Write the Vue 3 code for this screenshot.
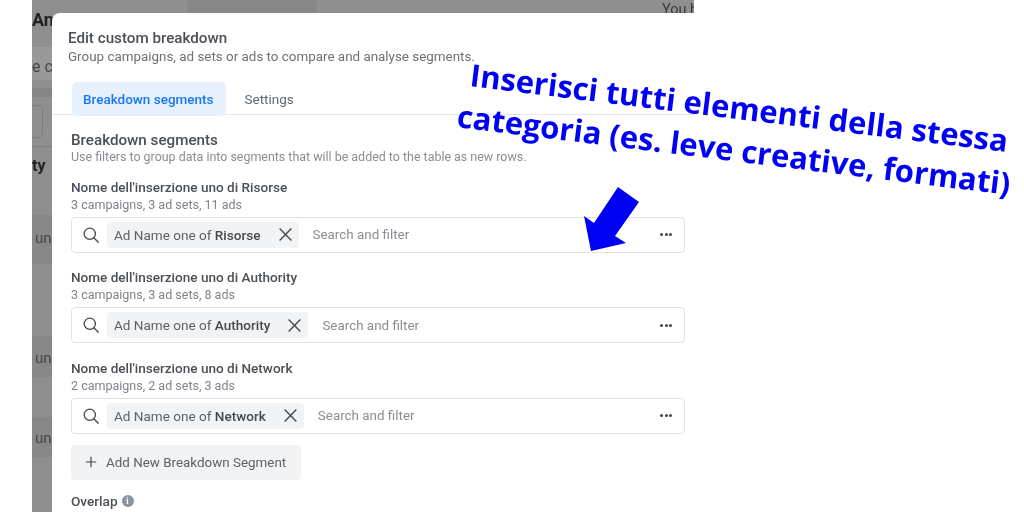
<script setup>
const segments = [
  { title: "Nome dell'inserzione uno di Risorse", meta: '3 campaigns, 3 ad sets, 11 ads', value: 'Risorse' },
  { title: "Nome dell'inserzione uno di Authority", meta: '3 campaigns, 3 ad sets, 8 ads', value: 'Authority' },
  { title: "Nome dell'inserzione uno di Network", meta: '2 campaigns, 2 ad sets, 3 ads', value: 'Network' },
]
</script>

<template>
  <div class="page">
    <div class="shot">
      <div class="backdrop">
        <div class="top-chip"></div>
        <div class="you">You h</div>
        <div class="bg-an">An</div>
        <div class="band b1"><span>e co</span></div>
        <div class="band b1a"></div>
        <div class="band-box"></div>
        <div class="rule"></div>
        <div class="bg-ty">ty</div>
        <div class="band b2"><span>uno</span></div>
        <div class="band b3"><span>uno</span></div>
        <div class="band b4"><span>uno</span></div>
      </div>
      <section class="modal">
        <header class="head">
          <h1>Edit custom breakdown</h1>
          <p>Group campaigns, ad sets or ads to compare and analyse segments.</p>
        </header>
        <nav class="tabs">
          <span class="tab active">Breakdown segments</span>
          <span class="tab">Settings</span>
        </nav>
        <div class="body">
          <h2>Breakdown segments</h2>
          <p class="hint">Use filters to group data into segments that will be added to the table as new rows.</p>
          <div v-for="s in segments" :key="s.value" class="segment">
            <h3>{{ s.title }}</h3>
            <p class="meta">{{ s.meta }}</p>
            <div class="field">
              <svg class="search" viewBox="0 0 16 16" width="16" height="16">
                <circle cx="6.8" cy="6.8" r="5.6" fill="none" stroke="#444950" stroke-width="1.3" />
                <path d="M10.8 10.8 15.6 15.6" stroke="#444950" stroke-width="1.3" fill="none" />
              </svg>
              <span class="chip">
                <span>Ad Name one of <b>{{ s.value }}</b></span>
                <svg class="x" viewBox="0 0 13 13" width="13" height="13">
                  <path d="M0.6 0.6 12.4 12.4M12.4 0.6 0.6 12.4" stroke="#444950" stroke-width="1.4" fill="none" />
                </svg>
              </span>
              <span class="placeholder">Search and filter</span>
              <span class="dots"><i></i><i></i><i></i></span>
            </div>
          </div>
          <button class="add">
            <svg viewBox="0 0 12 12" width="12" height="12">
              <path d="M6 .8v10.4M.8 6h10.4" stroke="#444950" stroke-width="1.2" fill="none" />
            </svg>
            Add New Breakdown Segment
          </button>
          <div class="overlap">Overlap <span class="info">i</span></div>
        </div>
      </section>
    </div>

    <div class="note">
      <div class="line l1">Inserisci tutti elementi della stessa</div>
      <div class="line l2">categoria (es. leve creative, formati)</div>
    </div>
    <svg class="arrow" viewBox="0 0 1024 512" width="1024" height="512">
      <polygon points="618,187 639,202 615,236 626,243 591,251 584,216 594,223" fill="#0000f5" />
    </svg>
  </div>
</template>

<style scoped>
.page {
  position: relative;
  width: 1024px;
  height: 512px;
  overflow: hidden;
  background: #fff;
  font-family: Roboto, "Liberation Sans", sans-serif;
  color: #444950;
  filter: blur(0.35px);
}
.shot {
  position: relative;
  width: 662px;
  height: 512px;
  margin-left: 32px;
  padding: 13px 0 0 20px;
  box-sizing: border-box;
}
.backdrop {
  position: absolute;
  inset: 0;
  background: #8f8f8f;
  overflow: hidden;
  color: #333;
}
.top-chip {
  position: absolute;
  left: 155px;
  top: 0;
  width: 130px;
  height: 30px;
  background: #878787;
  border-radius: 4px;
}
.you {
  position: absolute;
  left: 630px;
  top: 1px;
  font-size: 14.5px;
  line-height: 18px;
  color: #3a3a3a;
  white-space: nowrap;
}
.bg-an {
  position: absolute;
  left: 0;
  top: 9px;
  font-size: 18px;
  line-height: 22px;
  font-weight: 700;
  color: #222;
}
.bg-ty {
  position: absolute;
  left: 0;
  top: 157px;
  font-size: 16px;
  line-height: 18px;
  font-weight: 700;
  color: #222;
}
.band {
  position: absolute;
  left: 0;
  width: 20px;
  background: #878787;
  overflow: hidden;
  white-space: nowrap;
  font-size: 15px;
  color: #444;
}
.band span { display: block; margin-left: 3px; }
.b1 { top: 47px; height: 33px; background: #999; line-height: 40px; font-size: 16px; }
.b1 span { margin-left: 0; }
.b1a { top: 88px; height: 9px; background: #858585; }
.band-box {
  position: absolute;
  left: 0;
  top: 105px;
  width: 11px;
  height: 33px;
  box-sizing: border-box;
  border: 1px solid #7d7d7d;
  border-left: 0;
  border-radius: 0 5px 5px 0;
}
.rule {
  position: absolute;
  left: 0;
  top: 146px;
  width: 20px;
  height: 1px;
  background: #7f7f7f;
}
.b2 { top: 215px; height: 49px; line-height: 46px; }
.b3 { top: 336px; height: 41px; line-height: 44px; }
.b4 { top: 417px; height: 40px; line-height: 43px; }
.modal {
  position: relative;
  height: 499px;
  background: #fff;
  border-radius: 8px 0 0 0;
  overflow: hidden;
}
.head { padding: 16px 16px 0; }
h1 {
  margin: 0;
  font-size: 15.2px;
  line-height: 18px;
  font-weight: 500;
  color: #4b4f56;
}
.head p {
  margin: 1px 0 0;
  font-size: 13.4px;
  line-height: 18px;
  color: #707070;
}
.tabs {
  display: flex;
  align-items: flex-start;
  gap: 8px;
  height: 32px;
  margin-top: 16px;
  padding-left: 20px;
  border-bottom: 1px solid #e4e6eb;
  font-size: 13.5px;
}
.tab {
  display: flex;
  align-items: center;
  height: 34px;
  padding: 0 11px;
  color: #606770;
}
.active {
  padding-right: 12px;
  border-radius: 5px;
  background: #e7f0fd;
  color: #1877f2;
  font-weight: 500;
}
.body { padding: 16px 9px 0 19px; }
h2 {
  margin: 0;
  font-size: 15.2px;
  line-height: 18px;
  font-weight: 500;
  color: #4b4f56;
}
.hint {
  margin: 0;
  font-size: 12.45px;
  line-height: 16px;
  color: #8a8d91;
}
.segment { margin-top: 13.5px; }
.segment + .segment { margin-top: 16.5px; }
h3 {
  margin: 0;
  font-size: 13.55px;
  line-height: 17px;
  font-weight: 500;
  color: #4b4f56;
}
.meta {
  margin: 1px 0 4px;
  font-size: 12.5px;
  line-height: 16px;
  color: #7f8389;
}
.field {
  display: flex;
  align-items: center;
  height: 36px;
  box-sizing: border-box;
  border: 1px solid #dfe1e5;
  border-radius: 4px;
  padding: 0 11px;
}
.search { flex: none; }
.chip {
  display: flex;
  align-items: center;
  gap: 18px;
  height: 26px;
  margin-left: 8px;
  padding: 0 7px;
  border-radius: 4px;
  background: #f2f3f5;
  font-size: 13.55px;
  color: #5d6168;
}
.chip b { font-weight: 500; color: #444950; }
.x { flex: none; }
.placeholder {
  margin-left: 14px;
  font-size: 13.4px;
  color: #8a8d91;
}
.dots {
  display: flex;
  gap: 1.5px;
  margin-left: auto;
  margin-right: 1px;
}
.dots i {
  width: 3px;
  height: 3px;
  border-radius: 50%;
  background: #444950;
}
.add {
  display: flex;
  align-items: center;
  gap: 9px;
  width: 230px;
  height: 35px;
  margin-top: 11px;
  padding: 0 0 0 14px;
  border: 0;
  border-radius: 4px;
  background: #f2f3f5;
  font: 13.4px Roboto, "Liberation Sans", sans-serif;
  color: #5d6168;
}
.overlap {
  display: flex;
  align-items: center;
  gap: 4px;
  margin-top: 12px;
  font-size: 13.6px;
  font-weight: 500;
  line-height: 18px;
  color: #4b4f56;
}
.info {
  display: inline-block;
  width: 12px;
  height: 12px;
  border-radius: 50%;
  background: #8d949e;
  color: #fff;
  font-size: 9px;
  font-weight: 700;
  line-height: 12px;
  text-align: center;
}
.note {
  position: absolute;
  inset: 0;
  font-family: "Open Sans", sans-serif;
  font-weight: 700;
  font-size: 31px;
  line-height: 40px;
  color: #0000f5;
  white-space: nowrap;
}
.line {
  position: absolute;
  transform-origin: 0 100%;
  transform: rotate(7deg);
}
.l1 { left: 468px; top: 54px; }
.l2 { left: 455px; top: 95px; }
.arrow { position: absolute; left: 0; top: 0; }
</style>
